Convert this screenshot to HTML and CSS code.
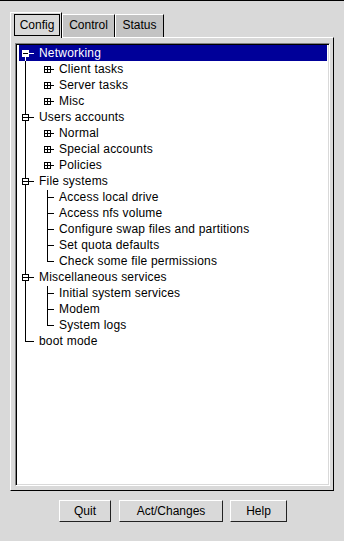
FILE: index.html
```html
<!DOCTYPE html>
<html>
<head>
<meta charset="utf-8">
<link rel="stylesheet" href="styles.css">
</head>
<body>
<div class="window">
  <div class="tabs">
    <div class="tab tab-sel"><div class="focus">Config</div></div>
    <div class="tab tab-control">Control</div>
    <div class="tab tab-status">Status</div>
  </div>
  <div class="page">
    <div class="listbox">
      <div class="row sel"><svg class="g0" width="20" height="16"><line x1="6.5" y1="11" x2="6.5" y2="16"/><rect x="3.5" y="5.5" width="6" height="6" class="box"/><line x1="4" y1="8.5" x2="9" y2="8.5" class="mark"/><line x1="10" y1="8.5" x2="15" y2="8.5"/></svg><span>Networking</span></div>
      <div class="row"><svg class="g1" width="40" height="16"><line x1="6.5" y1="0" x2="6.5" y2="16"/><rect x="25.5" y="5.5" width="6" height="6" class="box"/><line x1="26" y1="8.5" x2="31" y2="8.5"/><line x1="28.5" y1="6" x2="28.5" y2="11"/><line x1="32" y1="8.5" x2="35" y2="8.5"/></svg><span>Client tasks</span></div>
      <div class="row"><svg class="g1" width="40" height="16"><line x1="6.5" y1="0" x2="6.5" y2="16"/><rect x="25.5" y="5.5" width="6" height="6" class="box"/><line x1="26" y1="8.5" x2="31" y2="8.5"/><line x1="28.5" y1="6" x2="28.5" y2="11"/><line x1="32" y1="8.5" x2="35" y2="8.5"/></svg><span>Server tasks</span></div>
      <div class="row"><svg class="g1" width="40" height="16"><line x1="6.5" y1="0" x2="6.5" y2="16"/><rect x="25.5" y="5.5" width="6" height="6" class="box"/><line x1="26" y1="8.5" x2="31" y2="8.5"/><line x1="28.5" y1="6" x2="28.5" y2="11"/><line x1="32" y1="8.5" x2="35" y2="8.5"/></svg><span>Misc</span></div>
      <div class="row"><svg class="g0" width="20" height="16"><line x1="6.5" y1="0" x2="6.5" y2="16"/><rect x="3.5" y="5.5" width="6" height="6" class="box"/><line x1="4" y1="8.5" x2="9" y2="8.5"/><line x1="10" y1="8.5" x2="15" y2="8.5"/></svg><span>Users accounts</span></div>
      <div class="row"><svg class="g1" width="40" height="16"><line x1="6.5" y1="0" x2="6.5" y2="16"/><rect x="25.5" y="5.5" width="6" height="6" class="box"/><line x1="26" y1="8.5" x2="31" y2="8.5"/><line x1="28.5" y1="6" x2="28.5" y2="11"/><line x1="32" y1="8.5" x2="35" y2="8.5"/></svg><span>Normal</span></div>
      <div class="row"><svg class="g1" width="40" height="16"><line x1="6.5" y1="0" x2="6.5" y2="16"/><rect x="25.5" y="5.5" width="6" height="6" class="box"/><line x1="26" y1="8.5" x2="31" y2="8.5"/><line x1="28.5" y1="6" x2="28.5" y2="11"/><line x1="32" y1="8.5" x2="35" y2="8.5"/></svg><span>Special accounts</span></div>
      <div class="row"><svg class="g1" width="40" height="16"><line x1="6.5" y1="0" x2="6.5" y2="16"/><rect x="25.5" y="5.5" width="6" height="6" class="box"/><line x1="26" y1="8.5" x2="31" y2="8.5"/><line x1="28.5" y1="6" x2="28.5" y2="11"/><line x1="32" y1="8.5" x2="35" y2="8.5"/></svg><span>Policies</span></div>
      <div class="row"><svg class="g0" width="20" height="16"><line x1="6.5" y1="0" x2="6.5" y2="16"/><rect x="3.5" y="5.5" width="6" height="6" class="box"/><line x1="4" y1="8.5" x2="9" y2="8.5"/><line x1="10" y1="8.5" x2="15" y2="8.5"/></svg><span>File systems</span></div>
      <div class="row"><svg class="g1" width="40" height="16"><line x1="6.5" y1="0" x2="6.5" y2="16"/><line x1="28.5" y1="1" x2="28.5" y2="16"/><line x1="28" y1="8.5" x2="35" y2="8.5"/></svg><span>Access local drive</span></div>
      <div class="row"><svg class="g1" width="40" height="16"><line x1="6.5" y1="0" x2="6.5" y2="16"/><line x1="28.5" y1="0" x2="28.5" y2="16"/><line x1="28" y1="8.5" x2="35" y2="8.5"/></svg><span>Access nfs volume</span></div>
      <div class="row"><svg class="g1" width="40" height="16"><line x1="6.5" y1="0" x2="6.5" y2="16"/><line x1="28.5" y1="0" x2="28.5" y2="16"/><line x1="28" y1="8.5" x2="35" y2="8.5"/></svg><span>Configure swap files and partitions</span></div>
      <div class="row"><svg class="g1" width="40" height="16"><line x1="6.5" y1="0" x2="6.5" y2="16"/><line x1="28.5" y1="0" x2="28.5" y2="16"/><line x1="28" y1="8.5" x2="35" y2="8.5"/></svg><span>Set quota defaults</span></div>
      <div class="row"><svg class="g1" width="40" height="16"><line x1="6.5" y1="0" x2="6.5" y2="16"/><line x1="28.5" y1="0" x2="28.5" y2="9"/><line x1="28" y1="8.5" x2="35" y2="8.5"/></svg><span>Check some file permissions</span></div>
      <div class="row"><svg class="g0" width="20" height="16"><line x1="6.5" y1="0" x2="6.5" y2="16"/><rect x="3.5" y="5.5" width="6" height="6" class="box"/><line x1="4" y1="8.5" x2="9" y2="8.5"/><line x1="10" y1="8.5" x2="15" y2="8.5"/></svg><span>Miscellaneous services</span></div>
      <div class="row"><svg class="g1" width="40" height="16"><line x1="6.5" y1="0" x2="6.5" y2="16"/><line x1="28.5" y1="1" x2="28.5" y2="16"/><line x1="28" y1="8.5" x2="35" y2="8.5"/></svg><span>Initial system services</span></div>
      <div class="row"><svg class="g1" width="40" height="16"><line x1="6.5" y1="0" x2="6.5" y2="16"/><line x1="28.5" y1="0" x2="28.5" y2="16"/><line x1="28" y1="8.5" x2="35" y2="8.5"/></svg><span>Modem</span></div>
      <div class="row"><svg class="g1" width="40" height="16"><line x1="6.5" y1="0" x2="6.5" y2="16"/><line x1="28.5" y1="0" x2="28.5" y2="9"/><line x1="28" y1="8.5" x2="35" y2="8.5"/></svg><span>System logs</span></div>
      <div class="row"><svg class="g0" width="20" height="16"><line x1="6.5" y1="0" x2="6.5" y2="9"/><line x1="6" y1="8.5" x2="15" y2="8.5"/></svg><span>boot mode</span></div>
    </div>
  </div>
  <div class="buttons">
    <div class="btn btn-quit">Quit</div>
    <div class="btn btn-act">Act/Changes</div>
    <div class="btn btn-help">Help</div>
  </div>
</div>
</body>
</html>
```
FILE: styles.css
```css
* { box-sizing: border-box; }
html, body { margin: 0; padding: 0; }
body {
  width: 344px;
  height: 541px;
  overflow: hidden;
  background: #d9d9d9;
  font-family: "Liberation Sans", Arial, sans-serif;
  font-size: 12px;
  color: #000;
}
.window {
  height: 541px;
  border-top: 1px solid #000;
  padding: 11px 0 0 10px;
}
.tabs {
  display: flex;
  align-items: flex-end;
  height: 25px;
}
.tab {
  height: 23px;
  border-top: 1px solid #fff;
  border-left: 1px solid #fff;
  border-right: 1px solid #000;
  background: #c3c3c3;
  text-align: center;
  line-height: 20px;
  white-space: nowrap;
}
.tab-sel {
  position: relative;
  z-index: 1;
  width: 52px;
  height: 26px;
  margin-bottom: -1px;
  background: #d9d9d9;
  padding: 1px 1px 0 3px;
}
.focus {
  width: 46px;
  height: 22px;
  border: 1px solid #000;
  line-height: 20px;
  text-align: center;
}
.tab-control { width: 53px; }
.tab-status { width: 49px; }
.page {
  width: 324px;
  height: 454px;
  border: 1px solid;
  border-color: #fff #000 #000 #fff;
  padding: 5px 3px 4px 4px;
}
.listbox {
  width: 100%;
  height: 100%;
  background: #fff;
  border: 1px solid;
  border-color: #828282 #fff #fff #828282;
  box-shadow: inset 1px 1px 0 #000, inset -1px -1px 0 #d9d9d9;
  padding: 1px;
}
.row {
  display: flex;
  align-items: center;
  height: 16px;
  line-height: 16px;
  margin: 0 1px 0 2px;
  white-space: nowrap;
  letter-spacing: 0.2px;
}
.row svg {
  flex: none;
  display: block;
  shape-rendering: crispEdges;
}
.row svg line { stroke: #000; stroke-width: 1; }
.row svg .box { fill: #fff; stroke: #000; stroke-width: 1; }
.row.sel {
  background: #000099;
  color: #fff;
}
.row.sel svg line { stroke: #fff; }
.row.sel svg .box { fill: #fff; stroke: #fff; }
.row.sel svg line.mark { stroke: #000; }
.buttons {
  display: flex;
  margin-top: 9px;
  padding-left: 49px;
}
.btn {
  height: 22px;
  border: 1px solid;
  border-color: #fff #222 #222 #fff;
  background: #d9d9d9;
  text-align: center;
  line-height: 20px;
  white-space: nowrap;
}
.btn-quit { width: 52px; }
.btn-act { width: 104px; margin-left: 8px; }
.btn-help { width: 57px; margin-left: 7px; }
```
